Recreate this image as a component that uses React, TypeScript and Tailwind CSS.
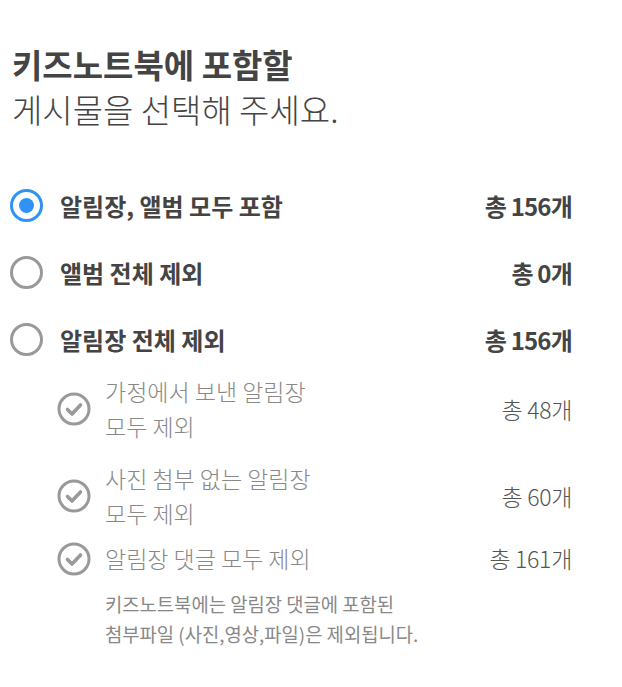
const font = { fontFamily: '"Noto Sans CJK KR", "Noto Sans", sans-serif' };

type Option = { label: string; count: string; selected?: boolean };
type Sub = { lines: string[]; count: string; gap: string };

const options: Option[] = [
    { label: '알림장, 앨범 모두 포함', count: '총 156개', selected: true },
    { label: '앨범 전체 제외', count: '총 0개' },
    { label: '알림장 전체 제외', count: '총 156개' },
];

const subs: Sub[] = [
    { lines: ['가정에서 보낸 알림장', '모두 제외'], count: '총 48개', gap: 'mt-[1px]' },
    { lines: ['사진 첨부 없는 알림장', '모두 제외'], count: '총 60개', gap: 'mt-[17px]' },
    { lines: ['알림장 댓글 모두 제외'], count: '총 161개', gap: 'mt-[10px]' },
];

const Radio = ({ selected }: { selected?: boolean }) => (
    <div
        className={`w-[33px] h-[33px] rounded-full border-[3px] flex items-center justify-center shrink-0 ${selected ? 'border-[#2f93f5]' : 'border-[#999999]'}`}
    >
        {selected && <div className="w-[15px] h-[15px] rounded-full bg-[#2f93f5]" />}
    </div>
);

const CheckCircle = () => (
    <svg className="w-[34px] h-[34px] shrink-0" viewBox="0 0 34 34" fill="none">
        <circle cx="17" cy="17" r="15" stroke="#999999" strokeWidth="3" />
        <path d="M10.5 17.5l4.5 4.5 8.5-9" stroke="#999999" strokeWidth="3.6" strokeLinecap="round" strokeLinejoin="round" />
    </svg>
);

export default function App() {
    return (
        <div className="w-[622px] h-[687px] bg-white text-[#444444] pl-[12px] pr-[50px] pt-[42px]" style={font}>
            {/* Title */}
            <div className="text-[33px] leading-[45px]">
                <div className="font-bold">키즈노트북에 포함할</div>
                <div className="font-light">게시물을 선택해 주세요.</div>
            </div>

            {/* Options */}
            <div className="mt-[40px] flex flex-col">
                {options.map((o) => (
                    <div key={o.label} className="flex items-center h-[67px] -ml-[2px]">
                        <Radio selected={o.selected} />
                        <div className="ml-[17px] flex-1 text-[24px] font-bold">{o.label}</div>
                        <div className="text-[24px] font-bold tracking-[-0.8px]">{o.count}</div>
                    </div>
                ))}
            </div>

            {/* Sub options */}
            <div className="pl-[45px] flex flex-col">
                {subs.map((s) => (
                    <div key={s.count} className={`flex items-center ${s.gap}`}>
                        <CheckCircle />
                        <div className="ml-[14px] flex-1 text-[23px] leading-[35px] font-light text-[#888888]">
                            {s.lines.map((l) => (
                                <div key={l}>{l}</div>
                            ))}
                        </div>
                        <div className="text-[23px] font-light text-[#555555] tracking-[-0.3px]">{s.count}</div>
                    </div>
                ))}
                <div className="pl-[48px] mt-[13px] text-[18.8px] leading-[30px] text-[#888888]">
                    <div>키즈노트북에는 알림장 댓글에 포함된</div>
                    <div>첨부파일 (사진,영상,파일)은 제외됩니다.</div>
                </div>
            </div>
        </div>
    );
}
